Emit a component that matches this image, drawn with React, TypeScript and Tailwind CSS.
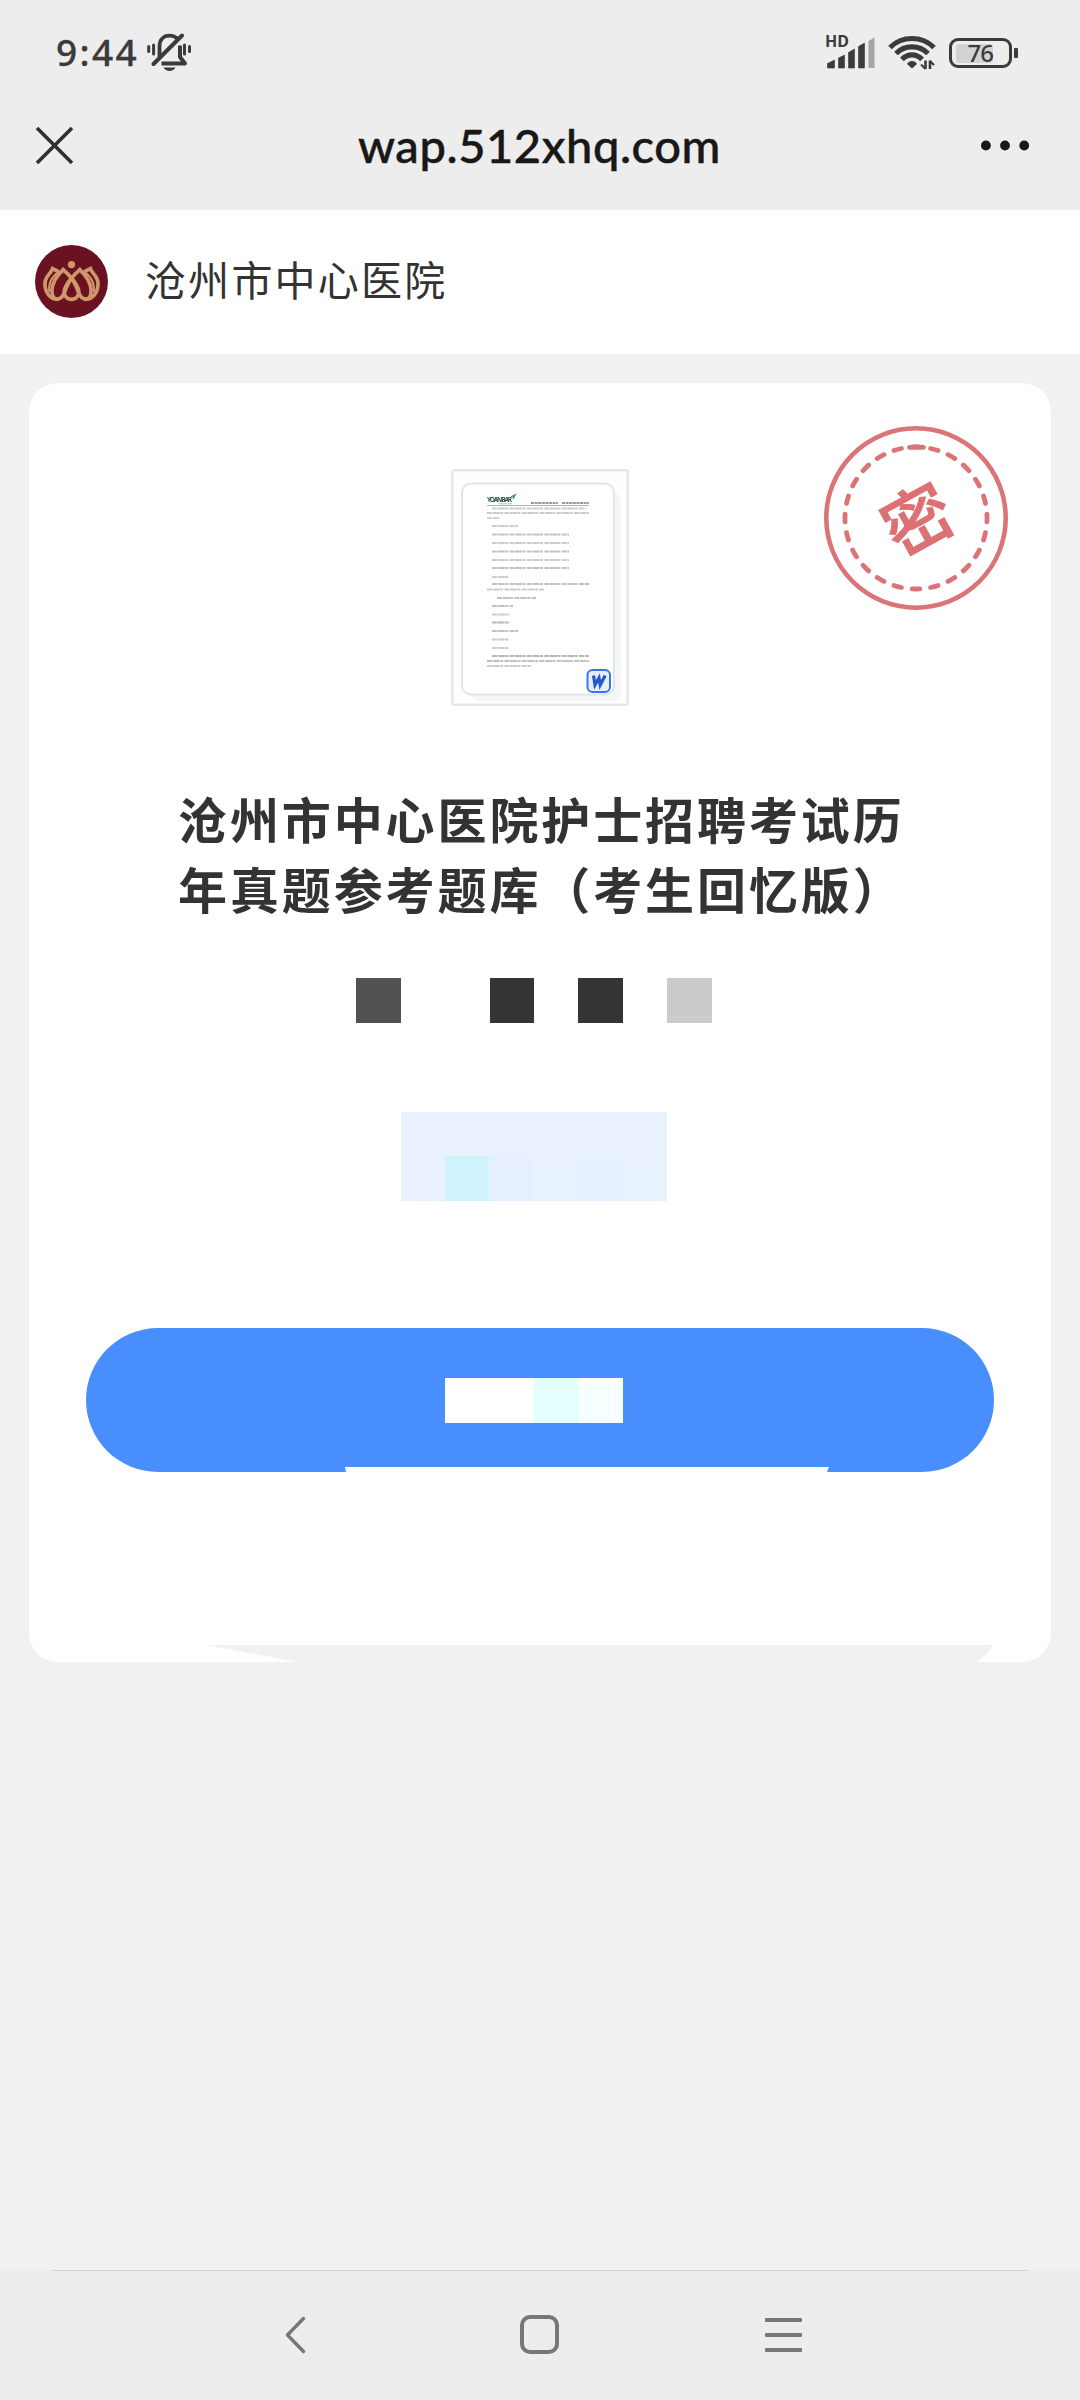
const titleLines = ["沧州市中心医院护士招聘考试历", "年真题参考题库（考生回忆版）"];

const mosaic = [
  { id: 1, color: "bg-[#525252]" },
  { id: 2, color: "bg-transparent" },
  { id: 3, color: "bg-transparent" },
  { id: 4, color: "bg-[#343434]" },
  { id: 5, color: "bg-transparent" },
  { id: 6, color: "bg-[#343434]" },
  { id: 7, color: "bg-transparent" },
  { id: 8, color: "bg-[#cbcbcb]" },
];

// [x, y, width, opacity] of each row of the preview page
const docRows = [
  [41, 39.5, 94, 0.5],
  [36, 44, 102, 0.5],
  [36, 49, 13, 0.4],
  [41, 57, 26, 0.5],
  [41, 65.5, 77, 0.6],
  [41, 74, 77, 0.5],
  [41, 82.5, 77, 0.6],
  [41, 91, 77, 0.5],
  [41, 99, 77, 0.6],
  [41, 108, 17, 0.5],
  [41, 115, 97, 0.6],
  [36, 120.5, 57, 0.5],
  [46, 129, 39, 0.6],
  [41, 137, 21, 0.6],
  [41, 145.5, 18, 0.5],
  [41, 153.5, 18, 0.7],
  [41, 162, 26, 0.6],
  [41, 170.5, 17, 0.5],
  [41, 179, 17, 0.5],
  [41, 187, 97, 0.7],
  [36, 192, 102, 0.6],
  [36, 197, 44, 0.5],
];

function MutedBell() {
  return (
    <svg className="ml-[9px] h-[40px] w-[46px]" viewBox="0 0 46 40" fill="none" stroke="#3b3b3b">
      <path d="M12.500 24V13.500C12.500 6.500 16.500 2.700 22.500 2.700c3.500 0 6.500 1.300 8.500 3.800" strokeWidth="3.800" />
      <path d="M33 12.500v11.500l5 6.500H14.500" strokeWidth="4" strokeLinejoin="round" />
      <path d="M6.500 31 35 2.500" strokeWidth="4" strokeLinecap="round" />
      <path d="M1.700 13.500v5M6.600 12v9M37.500 12v9M42.500 13.500v5" strokeWidth="3" strokeLinecap="round" />
      <path d="M16.500 34.500h12c-2 4.500-10 4.500-12 0z" fill="#3b3b3b" stroke="none" />
    </svg>
  );
}

function Signal() {
  return (
    <div className="flex h-[36px] w-[52px] flex-col">
      <span className="-mt-[1px] h-[15px] text-[16px] leading-[15px] font-bold text-[#3b3b3b]">HD</span>
      <svg className="-mt-[14px] h-[36px] w-[52px] shrink-0" viewBox="0 0 52 36" fill="#3b3b3b">
        <path
          d="M2.500 28.500 9.500 25v8H2.500zM13.500 23 19.500 20v13h-6zM23.500 17.500l6-3.500v19h-6zM33.500 11.500l6-3.500v25h-6z"
          stroke="#3b3b3b"
          strokeWidth="0.600"
          strokeLinejoin="round"
        />
        <path d="M43.500 6l6-3.500V33h-6z" fill="#a5a5a5" />
      </svg>
    </div>
  );
}

function Wifi() {
  return (
    <svg className="ml-[11px] h-[36px] w-[48px]" viewBox="0 0 48 36" fill="none" stroke="#3b3b3b" strokeWidth="5.200">
      <path d="M2 12.500C14 .5 34 .5 46 12.500" />
      <path d="M8 18.500C16.500 9.700 31.500 9.700 40 18.500" />
      <path d="M14 24.500C19.500 18.300 28.500 18.300 34 24.500" />
      <path d="M19 29c2-4 8-4 10 0l-5 4.500z" fill="#3b3b3b" stroke="none" />
      <path d="M37.500 25.500V34M42 34v-8.500" strokeWidth="2.600" />
      <path d="M33 29.500l4.500 4.500M42 26l4 4" strokeWidth="2" />
    </svg>
  );
}

function Battery() {
  return (
    <div className="ml-[13px] flex items-center">
      <div className="flex h-[30px] w-[63px] items-center rounded-[9px] border-[3px] border-[#3b3b3b] pl-1">
        <div className="flex h-[19px] w-[37px] items-center justify-end rounded-[3px] bg-[#d3d3d3] text-[24px] leading-none font-medium tracking-[-1px] text-[#3b3b3b]">
          76
        </div>
      </div>
      <div className="ml-[2px] h-[10px] w-[4px] rounded-[1px] bg-[#3b3b3b]" />
    </div>
  );
}

function StatusBar() {
  return (
    <div className="flex h-[81px] items-start justify-between pr-[62px] pl-[56px] font-['Noto_Sans',sans-serif]">
      <div className="flex pt-[33px]">
        <span className="w-[82px] text-[37px] leading-[38px] font-medium tracking-[2.400px] whitespace-nowrap text-[#3b3b3b] [-webkit-text-stroke:0.3px_#3b3b3b]">
          9:44
        </span>
        <MutedBell />
      </div>
      <div className="flex items-center pt-[35px]">
        <Signal />
        <Wifi />
        <Battery />
      </div>
    </div>
  );
}

function TitleBar() {
  return (
    <div className="flex h-[129px] items-start justify-between pr-[50px] pl-[35px]">
      <svg className="mt-[45px] h-[39px] w-[60px]" viewBox="0 0 60 39" stroke="#303030" strokeWidth="3.600">
        <path d="M2 2 37 37M37 2 2 37" />
      </svg>
      <h1 className="mt-[34px] ml-[3px] font-['Lato',sans-serif] text-[47px] leading-[60px] font-medium tracking-[0.600px] text-[#181818] [-webkit-text-stroke:0.5px_#181818]">
        wap.512xhq.com
      </h1>
      <svg className="mt-[59px] h-[11px] w-[49px]" viewBox="0 0 49 11" fill="#181818">
        <circle cx="4.900" cy="5.500" r="4.900" />
        <circle cx="24" cy="5.500" r="4.900" />
        <circle cx="43.200" cy="5.500" r="4.900" />
      </svg>
    </div>
  );
}

function HospitalLogo() {
  return (
    <svg className="h-[73px] w-[73px]" viewBox="104 132 220 220" fill="none" stroke="#cf986b" strokeWidth="11">
      <circle cx="214" cy="242" r="110" fill="#6b1222" stroke="none" />
      <circle cx="214" cy="191" r="11" fill="#cf986b" stroke="none" />
      <path d="M214 232C198 250 192 262 192 274C193 303 235 303 236 274C236 262 230 250 214 232" />
      <path d="M214 232C206 222 198 214 189 206C168 226 156 248 155 268C154 288 163 296 172 295C196 293 194 255 214 232" />
      <path d="M214 232C222 222 230 214 239 206C260 226 272 248 273 268C274 288 265 296 256 295C232 293 234 255 214 232" />
      <path d="M176 213 157 203C153 218 134 226 134 248C134 276 150 296 172 296" />
      <path d="M252 213 271 203C275 218 294 226 294 248C294 276 278 296 256 296" />
      <path d="M176 213C156 226 143 244 147 275M252 213C272 226 285 244 281 275" strokeWidth="6" />
    </svg>
  );
}

function DocPreview() {
  return (
    <svg className="h-[237px] w-[178px]" viewBox="0 0 178 237" fill="none">
      <rect x="1.300" y="1.300" width="175.400" height="234.400" rx="2" fill="#fefefe" stroke="#e6e6e6" strokeWidth="2.400" />
      <path d="M160 22q10 2 10 12v188q0 10-10 10H30q-8 0-11-8z" fill="#f4f5f7" />
      <rect x="11" y="14.500" width="152" height="211" rx="9" fill="#fff" stroke="#e3e4e6" strokeWidth="2" />
      <g className="blur-[0.7px]">
        <text x="36" y="32.500" fontSize="6.500" fontWeight="700" fontFamily="Noto Sans" fill="#2c5142" textLength="25">
          YOANBAR
        </text>
        <path d="M60 28l4-2-2 4" stroke="#3d9a77" strokeWidth="1.500" />
        <path d="M48 34.800h13" stroke="#aacdbd" />
        <path d="M36 36.500h102" stroke="#b0b3b2" strokeWidth="1.200" />
        <path d="M80 34h27M111 34h27" stroke="#999" strokeWidth="1.800" strokeDasharray="3 0.600" />
        {docRows.map(([x, y, w, opacity]) => (
          <path
            key={y}
            d={`M${x} ${y}h${w}`}
            stroke="#999"
            strokeWidth="2.200"
            strokeOpacity={opacity}
            strokeDasharray="5 0.700 7 0.500 3 1.200"
          />
        ))}
      </g>
      <rect x="136.500" y="201" width="22.500" height="22" rx="5" fill="#e5effc" stroke="#3a76e8" strokeWidth="2" />
      <path d="M142.500 206.500 144 216l4-7 1.200 7 5-9.500" stroke="#2559d4" strokeWidth="3.200" />
    </svg>
  );
}

function Seal() {
  return (
    <svg className="absolute top-[43px] right-[43px] h-[184px] w-[184px]" viewBox="0 0 184 184" fill="none" stroke="#da7476">
      <circle cx="92" cy="92" r="89.700" strokeWidth="4.600" />
      <circle
        cx="92"
        cy="92"
        r="71"
        strokeWidth="4.800"
        strokeLinecap="round"
        pathLength="432"
        strokeDasharray="7.500 10.500"
        strokeDashoffset="3.750"
        transform="rotate(-90 92 92)"
      />
      <path d="M85.500 21.300q7-.6 14 0" strokeWidth="4.800" strokeLinecap="round" />
      <text
        x="93"
        y="120"
        fontSize="69"
        fontWeight="500"
        fontFamily="Noto Sans CJK SC"
        textAnchor="middle"
        fill="#dc7072"
        stroke="#dc7072"
        strokeWidth="0.800"
        transform="rotate(-29 92 93)"
      >
        密
      </text>
    </svg>
  );
}

function NavBar() {
  return (
    <nav className="h-[130px] bg-[#ededed]">
      <div className="mx-[52px] h-px bg-[#d0d0d0]" />
      <div className="flex pt-[43px] pl-[282px]">
        <svg className="h-[42px] w-[24px]" viewBox="0 0 24 42" fill="none" stroke="#777" strokeWidth="3.400">
          <path d="M21.500 4.500 5.500 21 21.500 37.500" strokeLinecap="round" strokeLinejoin="round" />
        </svg>
        <div className="mt-[1px] ml-[214px] h-[39px] w-[39px] rounded-[10px] border-[4px] border-[#777]" />
        <div className="mt-[4px] ml-[206px] flex w-[37px] flex-col gap-[11px]">
          <div className="h-[4px] rounded-[1px] bg-[#777]" />
          <div className="h-[4px] rounded-[1px] bg-[#777]" />
          <div className="h-[4px] rounded-[1px] bg-[#777]" />
        </div>
      </div>
    </nav>
  );
}

function App() {
  return (
    <div className="flex h-[2400px] w-[1080px] flex-col overflow-hidden bg-[#f1f1f1] font-['Noto_Sans_CJK_SC',sans-serif]">
      <div className="h-[210px] shrink-0 bg-[#ededed]">
        <StatusBar />
        <TitleBar />
      </div>

      <header className="flex h-[144px] shrink-0 items-center bg-white pb-[2px] pl-[35px]">
        <HospitalLogo />
        <span className="mb-[5px] ml-[37px] text-[41px] leading-none tracking-[2.200px] text-[#333]">
          沧州市中心医院
        </span>
      </header>

      <main className="relative mx-[29px] mt-[29px] flex h-[1279px] shrink-0 flex-col items-center rounded-[29px] bg-white">
        <Seal />
        <div className="mt-[86px] h-[237px]">
          <DocPreview />
        </div>
        <h2 className="mt-[77px] w-[724px] text-[49px] leading-[70px] font-bold tracking-[2.900px] whitespace-nowrap text-[#333]">
          {titleLines.map((line) => (
            <span key={line} className="block">
              {line}
            </span>
          ))}
        </h2>

        <div className="mt-[55px] mr-[12px] flex">
          {mosaic.map((item) => (
            <div key={item.id} className={`h-[45px] w-[44.400px] ${item.color}`} />
          ))}
        </div>

        <div className="mt-[89px] mr-[12px] flex h-[89px] w-[266px] items-end bg-[#e9f0fe]">
          <div className="ml-[44px] h-[45px] w-[44px] bg-[#cff4fe]" />
          <div className="h-[45px] w-[44px] bg-[#e6effe]" />
          <div className="h-[45px] w-[44px] bg-[#e7f2fe]" />
          <div className="h-[45px] w-[45px] bg-[#e5f1fe]" />
          <div className="h-[45px] w-[45px] bg-[#e8f1fe]" />
        </div>

        <button
          type="button"
          className="relative mt-[127px] flex h-[144px] w-[908px] items-center justify-center rounded-full bg-[#488ffd]"
        >
          <span className="mt-px mr-[12px] flex h-[45px]">
            <span className="w-[89px] bg-white" />
            <span className="w-[45px] bg-[#e5feff]" />
            <span className="w-[44px] bg-[#f8ffff]" />
          </span>
          <svg className="absolute bottom-0 left-[259px] h-[5px] w-[484px]" viewBox="0 0 484 5">
            <path d="M0 0h484l-2 5H1z" fill="#fff" />
          </svg>
        </button>

        <svg className="absolute bottom-0 left-[177px] h-[17px] w-[787px]" viewBox="0 0 787 17">
          <path d="M0 0h787q-5 10-17 17H92z" fill="#f1f1f1" />
        </svg>
      </main>

      <div className="flex-1" />
      <NavBar />
    </div>
  );
}

export default App;
